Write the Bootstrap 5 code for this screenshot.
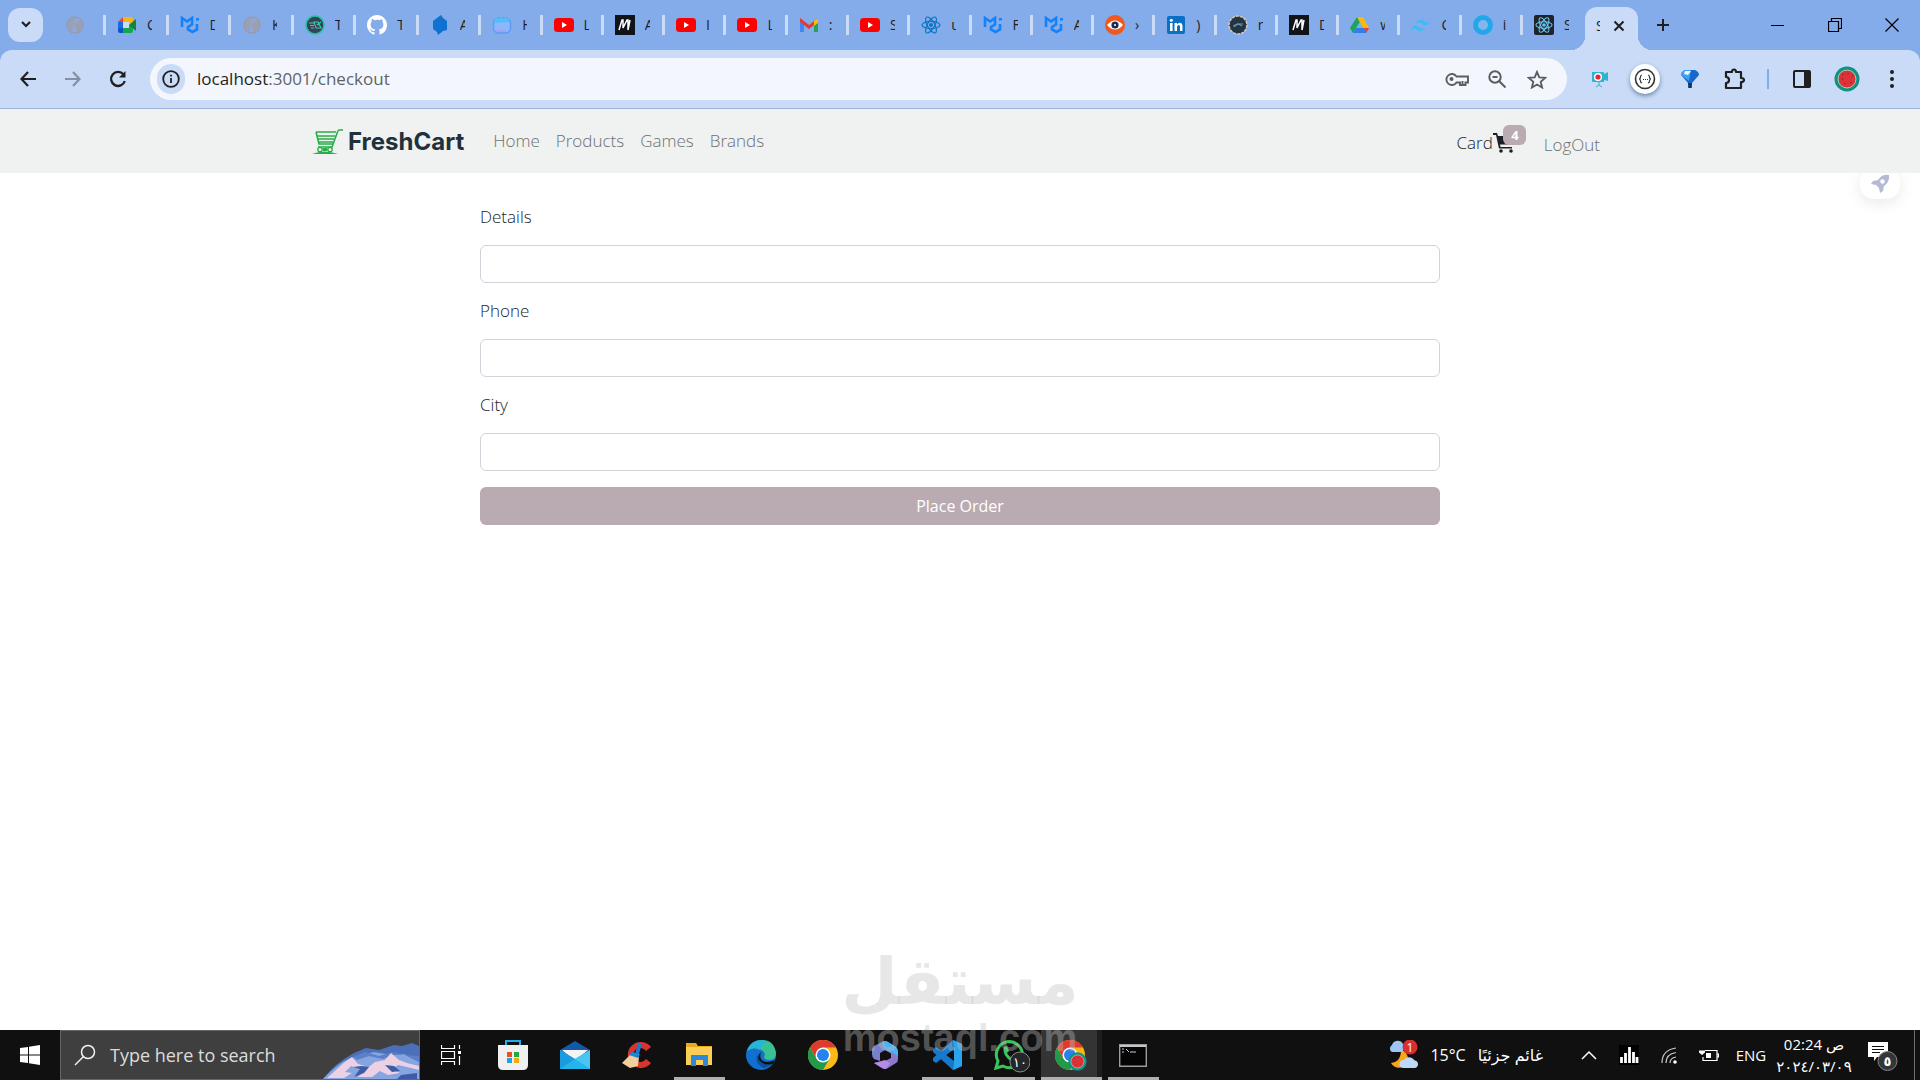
<!DOCTYPE html>
<html lang="en">
<head>
<meta charset="utf-8">
<meta name="viewport" content="width=device-width, initial-scale=1">
<title>FreshCart checkout</title>
<link rel="stylesheet" href="https://cdn.jsdelivr.net/npm/bootstrap@5.3.0/dist/css/bootstrap.min.css">
<style>
  body { font-family: "Open Sans", "Noto Sans", "DejaVu Sans", sans-serif; font-size: 17px; font-weight: 300; color: #212529; background: #fff; overflow: hidden; }
  svg { display: block; flex: none; }
  button { border: 0; background: none; padding: 0; }
  a { text-decoration: none; }

  .tabstrip { height: 50px; background: #84abea; padding-left: 8px; color: #1f1f1f; }
  .tab-search { width: 35px; height: 34px; border-radius: 12px; background: #c9dbf6; }
  .tabs-narrow { flex: 375 1 0; }
  .tabs-main { flex: 1041 1 0; }
  .tab-item { height: 20px; flex: 1 1 0; min-width: 0; border-left: 3px solid #c9dbf6; padding-left: 11px; gap: 10px; color: #1f1f1f; font-size: 14px; font-weight: 400; }
  .tab-item span { width: 5px; overflow: hidden; line-height: 20px; }
  .tab-first { flex: none; width: 60px; border-left: 0; padding-left: 22px; }
  .tab-last { flex: none; width: 65px; }
  .tab-active { position: relative; width: 53px; height: 43px; background: #c9dbf6; border-radius: 12px 12px 0 0; font-size: 14px; gap: 13px; padding: 0 0 6px 11px; }
  .tab-active span { width: 4px; overflow: hidden; font-weight: 400; }
  .tab-active::before, .tab-active::after { content: ""; position: absolute; bottom: 0; width: 14px; height: 14px; }
  .tab-active::before { left: -14px; background: radial-gradient(circle at 0 0, transparent 14px, #c9dbf6 14px); }
  .tab-active::after { right: -14px; background: radial-gradient(circle at 100% 0, transparent 14px, #c9dbf6 14px); }
  .tab-new { width: 50px; height: 50px; margin-right: 61px; }
  .win-btn { width: 57px; height: 50px; }

  .toolbar-wrap { background: #84abea; }
  .toolbar { height: 59px; padding: 0 6px 0 5px; background: #c9dbf6; border-bottom: 1px solid #9db0d8; border-radius: 12px 12px 0 0; }
  .tool-btn { width: 45px; height: 45px; }
  .omnibox { height: 42px; margin: 0 10px; border-radius: 21px; background: #f3f7fd; padding-left: 7px; padding-right: 10px; }
  .site-info { width: 28px; height: 30px; border-radius: 15px; background: #c9dbf6; }
  .omnibox-url { position: relative; height: 32px; margin-left: 12px; }
  .omnibox-url input { width: 100%; height: 32px; border: 0; background: transparent; outline: 0; color: transparent; font-size: 17px; padding: 0; }
  .omnibox-url label { position: absolute; inset: 0; pointer-events: none; font-size: 17px; line-height: 32px; color: #5f6368; font-weight: 400; }
  .omnibox-url b { font-weight: 400; color: #1f1f1f; }
  .omni-btn { width: 40px; height: 40px; }
  .tool-sep { width: 22px; }
  .tool-sep i { width: 2px; height: 20px; background: #84abea; }
  .round-ext { width: 30px; height: 30px; border-radius: 50%; background: #fff; box-shadow: 0 2px 4px #6d86ae; }

  .shopnav { height: 64px; background: #f0f2f1; padding: 0; position: relative; z-index: 2; }
  .brandmark { gap: 4px; padding-top: 2px; color: #21313c; font-family: Inter, sans-serif; font-size: 24px; font-weight: 700; line-height: 30px; margin-right: 21px; }
  .shopnav .nav-link { padding: 8px; color: #6c7073; line-height: 24px; }
  .cart-link { position: relative; padding-top: 4px; line-height: 24px; color: #212529; margin-right: 21px; }
  .cart-count { position: absolute; left: 47px; top: -2px; width: 23px; height: 20px; border-radius: 6px; background: #baabb2; color: #fff; font-size: 13px; font-weight: 700; line-height: 20px; text-align: center; }
  .launcher { position: absolute; z-index: 1; right: 20px; top: 168px; width: 40px; height: 31px; border-radius: 14px; background: #fff; box-shadow: 0 4px 16px rgba(0,0,0,.09); }

  .checkout { padding-top: 16px; }
  .checkout label { display: block; margin: 16px 0; line-height: 24px; }
  .checkout .form-control { height: 38px; border-color: #ced4da; }
  .btn-order { height: 38px; margin-top: 16px; border-radius: 6px; background: #baabb2; color: #fff; font-size: 16px; font-weight: 400; line-height: 24px; }

  .taskbar { height: 50px; background: #101010; color: #fff; font-weight: 400; position: relative; }
  .start-btn { width: 60px; height: 50px; }
  .task-search { width: 360px; height: 50px; background: #3f3f3f; border: 1px solid #666; padding-left: 13px; gap: 8px; overflow: hidden; }
  .task-search input { width: 180px; border: 0; outline: 0; background: transparent; color: #e4e4e4; font-size: 18px; padding: 0 0 0 6px; }
  .task-search input::placeholder { color: #dcdcdc; opacity: 1; }
  .task-app { width: 62px; height: 50px; position: relative; }
  .is-open::after { content: ""; position: absolute; left: 6px; right: 5px; bottom: 0; height: 3px; background: #b1adb0; }
  .is-current { background: linear-gradient(90deg, transparent 1px, #343434 1px, #343434 57px, #1d1d1f 57px); }
  .is-current::after { left: 1px; right: 0; }
  .weather { gap: 12px; font-size: 16px; margin-right: 26px; color: #fff; }
  .weather bdi, .clock { font-family: "Open Sans", "DejaVu Sans", sans-serif; }
  .tray-btn { width: 40px; height: 50px; color: #fff; }
  .lang-btn { width: 44px; height: 50px; color: #fff; font-size: 15px; }
  .clock { width: 82px; font-size: 15px; line-height: 22px; text-align: center; color: #fff; }
  .notice { width: 56px; margin-right: 3px; }
  .desk-edge { width: 6px; height: 50px; border-left: 1px solid #6d6d6d; }

  .watermark { position: absolute; left: 0; right: 0; bottom: 22px; z-index: 5; pointer-events: none; text-align: center; color: rgba(192,192,192,.39); font-weight: 700; }
  .watermark bdi { display: block; font-family: "DejaVu Sans", sans-serif; font-size: 65px; line-height: 72px; }
  .watermark span { display: block; font-family: "Liberation Sans", sans-serif; font-size: 38px; line-height: 40px; }
</style>
<script src="https://cdn.jsdelivr.net/npm/bootstrap@5.3.0/dist/js/bootstrap.bundle.min.js"></script>
</head>
<body class="d-flex flex-column min-vh-100 position-relative">

<svg width="0" height="0" class="position-absolute" aria-hidden="true">
  <symbol id="globe" viewBox="0 0 20 20"><circle cx="10" cy="10" r="8" fill="#8fa8d6" stroke="#979bad" stroke-width="1.500"/><path d="M3 8l3-4 4-1 1 2-3 1 1 3-3 2 2 2-1 3-3-3zM11 8l4-3 2 3v4l-4 5-2-1 1-3-3-2z" fill="#9c9fae"/></symbol>
  <symbol id="meet" viewBox="0 0 20 20"><path d="M1 7l5-5v5z" fill="#ea4335"/><path d="M6 2h8q2 0 2 2v4l-4 2V7H6z" fill="#fbb512"/><path d="M1 7h5v6H1z" fill="#1b6be0"/><path d="M1 13h5v5H3q-2 0-2-2z" fill="#0b55c4"/><path d="M6 13h6v-3l4 2v4q0 2-2 2H6z" fill="#18a64a"/><path d="M6 7h6v6H6z" fill="#c9dbf6"/><path d="M12 10l7-6v12z" fill="#0f8540"/></symbol>
  <symbol id="mui" viewBox="0 0 20 20"><path d="M2 12V3l5 3.500L12 3v6.500L8 12v2.500l4.500 2.500 4.500-2.500V9" fill="none" stroke="#1482fa" stroke-width="2.600"/><path d="M16 3h3v2.500h-3z" fill="#1482fa"/></symbol>
  <symbol id="tealeaf" viewBox="0 0 20 20"><circle cx="10" cy="10" r="9" fill="#3a4056" stroke="#22c5a9" stroke-width="1.600"/><path d="M4 8h5M5 10.500h4M6 13h3M9 7h4l3 6h-5zM12 10l4-3" stroke="#2cd3ae" stroke-width="1.100" fill="none"/></symbol>
  <symbol id="github" viewBox="0 0 16 16"><path fill="#fff" d="M8 0C3.580 0 0 3.580 0 8c0 3.540 2.290 6.530 5.470 7.590.4.070.55-.17.55-.38v-1.490c-2.010.37-2.530-.49-2.690-.94-.09-.23-.48-.94-.82-1.130-.28-.15-.68-.52-.01-.53.63-.01 1.080.58 1.230.82.72 1.210 1.870.87 2.330.66.07-.52.28-.87.51-1.070-1.780-.2-3.640-.89-3.640-3.950 0-.87.31-1.590.82-2.150-.08-.2-.36-1.020.08-2.120 0 0 .67-.21 2.200.82A7.600 7.600 0 0 1 8 3.870c.68 0 1.360.09 2 .27 1.530-1.040 2.200-.82 2.200-.82.44 1.100.16 1.920.08 2.120.51.56.82 1.270.82 2.150 0 3.070-1.870 3.750-3.650 3.950.29.25.54.73.54 1.480v2.200c0 .21.15.46.55.38A8 8 0 0 0 16 8c0-4.420-3.580-8-8-8z"/></symbol>
  <symbol id="bluehex" viewBox="0 0 20 20"><path d="M3 6l8-6 2 3 4 3v9l-4 1-5 4-1-3-4-3z" fill="#0d72d2"/></symbol>
  <symbol id="calendar" viewBox="0 0 20 20"><rect x="1.500" y="3" width="17" height="15" rx="5" fill="#8db6fb" stroke="#5c9bf5" stroke-width="1.400"/><path d="M2 5l3-3 2 2 2-2 2 2 2-2 2 2 2-1v4L2 8z" fill="#51bff8"/><path d="M4 16h10" stroke="#ac8cf2"/></symbol>
  <symbol id="youtube" viewBox="0 0 20 20"><rect y="3" width="20" height="14" rx="3.500" fill="#f00"/><path d="M8 7l5 3-5 3z" fill="#fff"/></symbol>
  <symbol id="mono" viewBox="0 0 20 20"><path d="M0 0h20v20H0z" fill="#101318"/><path d="M4 15L7 5h1v8l4-8h1v10M15 5l-2 10" stroke="#fff" stroke-width="1.500" fill="none"/></symbol>
  <symbol id="gmail" viewBox="0 0 20 20"><path d="M1 5v12h4V9z" fill="#4285f4"/><path d="M19 5v12h-4V9z" fill="#22a455"/><path d="M1 3l9 7 9-7v4l-9 7-9-7z" fill="#e33b2e"/><path d="M15 6l4-3v5l-4 3z" fill="#fbbc04"/></symbol>
  <symbol id="atom" viewBox="0 0 20 20"><g fill="none" stroke="currentColor" stroke-width="1.200"><ellipse cx="10" cy="10" rx="9" ry="3.600"/><ellipse cx="10" cy="10" rx="9" ry="3.600" transform="rotate(60 10 10)"/><ellipse cx="10" cy="10" rx="9" ry="3.600" transform="rotate(120 10 10)"/></g><circle cx="10" cy="10" r="2" fill="currentColor"/></symbol>
  <symbol id="eye" viewBox="0 0 20 20"><circle cx="10" cy="10" r="10" fill="#f2571d"/><path d="M2 10q8-9 16 0-8 9-16 0z" fill="#fff"/><circle cx="10" cy="10" r="3.600" fill="#1e2b50"/><circle cx="10" cy="10" r="1" fill="#fff"/></symbol>
  <symbol id="linkedin" viewBox="0 0 20 20"><rect x="1" y="1" width="18" height="18" rx="2" fill="#0a70c6"/><path d="M4 8h2.600v8H4zM8.500 8H11v1.300Q12 7.800 13.700 7.800 16.500 8 16.500 11v5H14v-4.500q0-1.500-1.300-1.500T11 11.700V16H8.500z" fill="#fff"/><circle cx="5.300" cy="5.300" r="1.500" fill="#fff"/></symbol>
  <symbol id="seal" viewBox="0 0 20 20"><circle cx="10" cy="10" r="9" fill="#203646" stroke="#d7c6ae" stroke-width="1.600" stroke-dasharray="3 1"/><path d="M5 11l4-2h6M6 12l4-3 4 2" stroke="#8f979f" fill="none"/></symbol>
  <symbol id="drive" viewBox="0 0 20 20"><path d="M7 2h6L6 13l-3 5-3-5z" fill="#1ba45a"/><path d="M7 2h6l6 11h-6z" fill="#fbb90c"/><path d="M6 13h13l-3 5H3z" fill="#2f80ed"/><path d="M14 13h5l-3 5z" fill="#e84335"/><path d="M10 7l3 6H7z" fill="#84abea"/></symbol>
  <symbol id="tailwind" viewBox="0 0 20 20"><path d="M5 9q2-5 6-4 1.500.5 3 2 2 2 5-1-2 5-6 4-1.500-.5-3-2-2-2-5 1zM0 15q2-5 6-4 1.500.5 3 2 2 2 5-1-2 5-6 4-1.500-.5-3-2-2-2-5 1z" fill="#38bdf8"/></symbol>
  <symbol id="ring" viewBox="0 0 20 20"><circle cx="10" cy="10" r="7.500" fill="#84b6ee" stroke="#22a7ea" stroke-width="5"/></symbol>
  <symbol id="chrome" viewBox="0 0 30 30"><circle cx="15" cy="15" r="15" fill="#fbb917"/><path d="M2 7.500A15 15 0 0 1 28 7.500H15L8.500 18.700z" fill="#df3a30"/><path d="M2 7.500A15 15 0 0 0 15 30l6.500-11.300H8.500z" fill="#229a48"/><circle cx="15" cy="15" r="7.500" fill="#fff"/><circle cx="15" cy="15" r="6" fill="#2583ee"/></symbol>
  <symbol id="melon" viewBox="0 0 26 26"><circle cx="13" cy="13" r="12.500" fill="#129082"/><circle cx="13" cy="13" r="9" fill="#dd3238" stroke="#9ed4b0"/><path d="M9 8v1M14 7v1M18 10h1M8 13h1M17 16v1M11 17v1" stroke="#6d1c23"/></symbol>
</svg>

<header>
  <nav class="tabstrip d-flex align-items-center" aria-label="Browser tabs">
    <button class="tab-search d-flex align-items-center justify-content-center" aria-label="Search tabs"><svg width="12" height="8" viewBox="0 0 12 8"><path d="M2 1l4 4 4-4" fill="none" stroke="#1f1f1f" stroke-width="2.200"/></svg></button>
    <a href="#" class="tab-item tab-first d-flex align-items-center" aria-label="Tab"><svg width="20" height="20"><use href="#globe"/></svg></a>
    <div class="tabs-narrow d-flex">
      <a href="#" class="tab-item d-flex align-items-center"><svg width="20" height="20"><use href="#meet"/></svg><span>C</span></a>
      <a href="#" class="tab-item d-flex align-items-center"><svg width="20" height="20"><use href="#mui"/></svg><span>D</span></a>
      <a href="#" class="tab-item d-flex align-items-center"><svg width="20" height="20"><use href="#globe"/></svg><span>K</span></a>
      <a href="#" class="tab-item d-flex align-items-center"><svg width="20" height="20"><use href="#tealeaf"/></svg><span>T</span></a>
      <a href="#" class="tab-item d-flex align-items-center"><svg width="20" height="20"><use href="#github"/></svg><span>T</span></a>
      <a href="#" class="tab-item d-flex align-items-center"><svg width="20" height="20"><use href="#bluehex"/></svg><span>A</span></a>
    </div>
    <div class="tabs-main d-flex">
      <a href="#" class="tab-item d-flex align-items-center"><svg width="20" height="20"><use href="#calendar"/></svg><span>H</span></a>
      <a href="#" class="tab-item d-flex align-items-center"><svg width="20" height="20"><use href="#youtube"/></svg><span>L</span></a>
      <a href="#" class="tab-item d-flex align-items-center"><svg width="20" height="20"><use href="#mono"/></svg><span>A</span></a>
      <a href="#" class="tab-item d-flex align-items-center"><svg width="20" height="20"><use href="#youtube"/></svg><span>I</span></a>
      <a href="#" class="tab-item d-flex align-items-center"><svg width="20" height="20"><use href="#youtube"/></svg><span>L</span></a>
      <a href="#" class="tab-item d-flex align-items-center"><svg width="20" height="20"><use href="#gmail"/></svg><span>:</span></a>
      <a href="#" class="tab-item d-flex align-items-center"><svg width="20" height="20"><use href="#youtube"/></svg><span>S</span></a>
      <a href="#" class="tab-item d-flex align-items-center"><svg width="20" height="20" color="#0b75c4"><use href="#atom"/></svg><span>u</span></a>
      <a href="#" class="tab-item d-flex align-items-center"><svg width="20" height="20"><use href="#mui"/></svg><span>F</span></a>
      <a href="#" class="tab-item d-flex align-items-center"><svg width="20" height="20"><use href="#mui"/></svg><span>A</span></a>
      <a href="#" class="tab-item d-flex align-items-center"><svg width="20" height="20"><use href="#eye"/></svg><span>›</span></a>
      <a href="#" class="tab-item d-flex align-items-center"><svg width="20" height="20"><use href="#linkedin"/></svg><span>)</span></a>
      <a href="#" class="tab-item d-flex align-items-center"><svg width="20" height="20"><use href="#seal"/></svg><span>r</span></a>
      <a href="#" class="tab-item d-flex align-items-center"><svg width="20" height="20"><use href="#mono"/></svg><span>D</span></a>
      <a href="#" class="tab-item d-flex align-items-center"><svg width="20" height="20"><use href="#drive"/></svg><span>w</span></a>
      <a href="#" class="tab-item d-flex align-items-center"><svg width="20" height="20"><use href="#tailwind"/></svg><span>C</span></a>
      <a href="#" class="tab-item d-flex align-items-center"><svg width="20" height="20"><use href="#ring"/></svg><span>i</span></a>
    </div>
    <a href="#" class="tab-item tab-last d-flex align-items-center"><svg width="20" height="20" viewBox="0 0 20 20" color="#67c5f0"><rect width="20" height="20" rx="2" fill="#202329"/><use href="#atom" x="1" y="1" width="18" height="18"/></svg><span>S</span></a>
    <div class="tab-active d-flex align-items-center align-self-end"><span>S</span><button aria-label="Close tab"><svg width="12" height="12" viewBox="0 0 12 12"><path d="M1.500 1.500l9 9m0-9l-9 9" stroke="#1f1f1f" stroke-width="2"/></svg></button></div>
    <button class="tab-new d-flex align-items-center justify-content-center" aria-label="New tab"><svg width="14" height="14" viewBox="0 0 14 14"><path d="M7 1v12M1 7h12" stroke="#1f1f1f" stroke-width="2"/></svg></button>
    <button class="win-btn d-flex align-items-center justify-content-center" aria-label="Minimize"><svg width="13" height="13"><path d="M0 6.500h13" stroke="#000"/></svg></button>
    <button class="win-btn d-flex align-items-center justify-content-center" aria-label="Restore"><svg width="14" height="14" viewBox="0 0 14 14"><path d="M.5 3.500h10v10H.5zM3.500 3V.5h10v10H11" fill="none" stroke="#000" stroke-width="1.200"/></svg></button>
    <button class="win-btn d-flex align-items-center justify-content-center" aria-label="Close window"><svg width="14" height="14" viewBox="0 0 14 14"><path d="M.5.5l13 13m0-13l-13 13" stroke="#000" stroke-width="1.200"/></svg></button>
  </nav>

  <div class="toolbar-wrap">
    <div class="toolbar d-flex align-items-center">
      <button class="tool-btn d-flex align-items-center justify-content-center" aria-label="Back"><svg width="16" height="16" viewBox="0 0 16 16"><path d="M8 1L1.500 8 8 15M1.500 8H16" fill="none" stroke="#1f1f1f" stroke-width="2.200"/></svg></button>
      <button class="tool-btn d-flex align-items-center justify-content-center" aria-label="Forward"><svg width="16" height="16" viewBox="0 0 16 16"><path d="M8 1l6.500 7L8 15M14.500 8H0" fill="none" stroke="#8590a3" stroke-width="2.200"/></svg></button>
      <button class="tool-btn d-flex align-items-center justify-content-center" aria-label="Reload"><svg width="18" height="18" viewBox="0 0 18 18"><path d="M14.500 4.500A7 7 0 1 0 15.800 11" fill="none" stroke="#1f1f1f" stroke-width="2.300"/><path d="M16.500 1v6.500H10z" fill="#1f1f1f"/></svg></button>
      <div class="omnibox flex-grow-1 d-flex align-items-center">
        <button class="site-info d-flex align-items-center justify-content-center" aria-label="Site information"><svg width="18" height="18" viewBox="0 0 18 18"><circle cx="9" cy="9" r="7.800" fill="none" stroke="#1f1f1f" stroke-width="1.800"/><path d="M9 8v5M9 4.800v1.800" stroke="#1f1f1f" stroke-width="1.800"/></svg></button>
        <div class="omnibox-url flex-grow-1"><input id="url" type="text"><label for="url"><b>localhost</b>:3001/checkout</label></div>
        <button class="omni-btn d-flex align-items-center justify-content-center" aria-label="Passwords"><svg width="24" height="14" viewBox="0 0 24 14"><path d="M11.500 4.500H23v6h-2.500V13H15v-2.500h-3.500A5.500 5.500 0 1 1 11.500 4.500zM17.500 12V9" fill="none" stroke="#5b5e63" stroke-width="1.900"/><circle cx="6.500" cy="7" r="2" fill="#5b5e63"/></svg></button>
        <button class="omni-btn d-flex align-items-center justify-content-center" aria-label="Zoom"><svg width="18" height="18" viewBox="0 0 18 18"><circle cx="7" cy="7" r="5.700" fill="none" stroke="#5b5e63" stroke-width="2"/><path d="M11 11l6.500 6.500M4.500 7h5" stroke="#5b5e63" stroke-width="2"/></svg></button>
        <button class="omni-btn d-flex align-items-center justify-content-center" aria-label="Bookmark"><svg width="20" height="19" viewBox="0 0 20 19"><path d="M10 2l2.300 5.400 5.900.5-4.500 3.900 1.400 5.700L10 14.500l-5.100 3 1.400-5.700-4.500-3.900 5.900-.5z" fill="none" stroke="#5b5e63" stroke-width="1.900"/></svg></button>
      </div>
      <button class="tool-btn d-flex align-items-center justify-content-center" aria-label="Recorder"><svg width="18" height="18" viewBox="0 0 18 18"><path d="M1 2h11q1 0 1 1v1l4-2v9l-4-1v2H2q-1 0-1-1z" fill="#2db5cf"/><circle cx="7" cy="7" r="4" fill="#fff"/><circle cx="7" cy="7" r="2.600" fill="#e22736"/><path d="M8 12v3M5 17l3-2 3 2" stroke="#2db5cf" fill="none"/></svg></button>
      <button class="tool-btn d-flex align-items-center justify-content-center" aria-label="Formatter"><span class="round-ext d-flex align-items-center justify-content-center"><svg width="22" height="22" viewBox="0 0 22 22"><circle cx="11" cy="11" r="9.500" fill="none" stroke="#303338" stroke-width="1.600"/><path d="M8 7q-1.500 0-1.500 2T5 11q1.500 0 1.500 2T8 15M14 7q1.500 0 1.500 2t1.500 2q-1.500 0-1.500 2T14 15M9 11.500h1m1 0h1m1 0h1" fill="none" stroke="#303338" stroke-width="1.200"/></svg></span></button>
      <button class="tool-btn d-flex align-items-center justify-content-center" aria-label="Balloon"><svg width="18" height="20" viewBox="0 0 18 20"><path d="M4 1h10q4 2 4 5l-7 8v5H7v-5L0 6q0-3 4-5z" fill="#1669ca"/><path d="M4 1h6L8 12 0 6q0-3 4-5z" fill="#3fa0ee"/><path d="M4 2h6L7 6 3 5z" fill="#e7f8ff"/><path d="M7 14h4l-1 5H8z" fill="#20304e"/></svg></button>
      <button class="tool-btn d-flex align-items-center justify-content-center" aria-label="Extensions"><svg width="22" height="22" viewBox="0 0 22 22"><path d="M2 4h6q0-2.500 2-2.500T12 4h5v6q3 0 3 2t-3 2v6H2v-5q3 0 3-3T2 9z" fill="none" stroke="#1f1f1f" stroke-width="2.200" stroke-linejoin="round"/></svg></button>
      <div class="tool-sep d-flex justify-content-center"><i></i></div>
      <button class="tool-btn d-flex align-items-center justify-content-center" aria-label="Side panel"><svg width="18" height="18" viewBox="0 0 18 18"><rect x="1" y="1" width="16" height="16" rx="1" fill="none" stroke="#1f1f1f" stroke-width="2"/><path d="M11 1h6v16h-6z" fill="#1f1f1f"/></svg></button>
      <button class="tool-btn d-flex align-items-center justify-content-center" aria-label="Profile"><svg width="26" height="26"><use href="#melon"/></svg></button>
      <button class="tool-btn d-flex align-items-center justify-content-center" aria-label="Menu"><svg width="4" height="18" viewBox="0 0 4 18" fill="#1f1f1f"><circle cx="2" cy="2" r="2"/><circle cx="2" cy="9" r="2"/><circle cx="2" cy="16" r="2"/></svg></button>
    </div>
  </div>
</header>

<div class="flex-grow-1 d-flex flex-column">
  <nav class="navbar navbar-expand shopnav">
    <div class="container">
      <a href="#" class="brandmark d-flex align-items-center"><svg width="32" height="26" viewBox="0 0 32 26"><path d="M31 1h-4q-1 0-1.500 2L20 18H6M4 3h20M4 3l3 12h14M5 7h18M6 10h16M6 13h15" fill="none" stroke="#29ad49" stroke-width="1.600"/><path d="M0 25q12-5 26 0z" fill="#29ad49"/><circle cx="8" cy="20.500" r="2.200" fill="#f0f2f1" stroke="#29ad49" stroke-width="1.300"/><circle cx="18" cy="20.500" r="2.200" fill="#f0f2f1" stroke="#29ad49" stroke-width="1.300"/><path d="M11 19h4v3h-4z" fill="#29ad49"/></svg>FreshCart</a>
      <ul class="navbar-nav me-auto">
        <li class="nav-item"><a class="nav-link" href="#">Home</a></li>
        <li class="nav-item"><a class="nav-link" href="#">Products</a></li>
        <li class="nav-item"><a class="nav-link" href="#">Games</a></li>
        <li class="nav-item"><a class="nav-link" href="#">Brands</a></li>
      </ul>
      <a href="#" class="cart-link d-flex align-items-center">Card<svg width="22" height="20" viewBox="0 0 22 20"><path d="M0 0h4l1 3h16l-2 8.500H7L7.500 14H19v1.600H6L3 2H0z" fill="#1c2024"/><circle cx="8" cy="18" r="1.800" fill="#1c2024"/><circle cx="18" cy="18" r="1.800" fill="#1c2024"/></svg><span class="cart-count">4</span></a>
      <ul class="navbar-nav"><li class="nav-item pt-2"><a class="nav-link" href="#">LogOut</a></li></ul>
    </div>
  </nav>
  <button class="launcher d-flex align-items-center justify-content-center" aria-label="Launch"><svg width="20" height="20" viewBox="0 0 20 20"><path d="M19 1q-7-1-11 5L3 7 1 10l5 1 3 3 1 5 3-2 1-5q6-4 5-11z" fill="#b6b9d5"/><circle cx="12.500" cy="7.500" r="2.200" fill="#fff"/></svg></button>

  <main>
    <form class="checkout w-50 mx-auto">
      <label for="details">Details</label>
      <input id="details" type="text" class="form-control">
      <label for="phone">Phone</label>
      <input id="phone" type="tel" class="form-control">
      <label for="city">City</label>
      <input id="city" type="text" class="form-control">
      <button type="button" class="btn btn-order w-100">Place Order</button>
    </form>
  </main>
</div>

<footer class="taskbar d-flex align-items-center">
  <button class="start-btn d-flex align-items-center justify-content-center" aria-label="Start"><svg width="20" height="20" viewBox="0 0 20 20"><path d="M0 3l8-1v7.500H0zM9 1.800L20 0v9.500H9zM0 10.500h8V18l-8-1zM9 10.500h11V20L9 18.200z" fill="#fff"/></svg></button>
  <div class="task-search d-flex align-items-center">
    <svg width="22" height="22" viewBox="0 0 22 22"><circle cx="14" cy="8" r="6.500" fill="none" stroke="#f2f2f2" stroke-width="1.500"/><path d="M9.500 12.500L1 21" stroke="#f2f2f2" stroke-width="1.500"/></svg>
    <input type="text" placeholder="Type here to search" aria-label="Search">
    <svg class="ms-auto align-self-end" width="96" height="36" viewBox="0 0 96 36"><path d="M0 36Q12 20 31 10l12-5 13 2 15-5 8 1 10-3 7 3v33z" fill="#4b70b8"/><path d="M0 36Q18 17 31 14l20-5 18 3 12-1 15 8v17z" fill="#84a5df"/><path d="M30 14l12-5 14 4 15-4 10 3 15 1v6l-14-7-10-1-12 5-14-3-12 4z" fill="#5b7fc9"/><path d="M14 26q7-7 15-12l6 7 7 2-8 2-6-2-6 6 7 1-8 5H4zM41 28l11-9 10-2 6-7 8 7 8 3 12 3v4l-12-3-9-2-6 4 8 4-12 2-8-4-8 6H35z" fill="#ecd0e4"/><path d="M30 24l7 2-6 8 10-4 5-6-8-1M62 22l9 1 6 5-8 1M78 32l16-2v6H74z" fill="#3f5ba5"/></svg>
  </div>
  <button class="task-app d-flex align-items-center justify-content-center" aria-label="Task view"><svg width="20" height="20" viewBox="0 0 20 20"><path d="M.5 0v3.500h13V0M.5 20v-3.500h13V20M.5 6.500h13v7H.5zM18.500 0v4M18.500 11v9" fill="none" stroke="#fff" stroke-width="1.200"/><path d="M17 6h3v3h-3z" fill="#fff"/></svg></button>
  <button class="task-app d-flex align-items-center justify-content-center" aria-label="Store"><svg width="30" height="30" viewBox="0 0 30 30"><path d="M8 6V1h14v5" fill="none" stroke="#26a9ec" stroke-width="2"/><path d="M0 5h30v20q0 5-5 5H5q-5 0-5-5z" fill="#f0f0f0"/><path d="M9 12h5v5H9z" fill="#f04d22"/><path d="M16 12h5v5h-5z" fill="#28a745"/><path d="M9 18h5v5H9z" fill="#1ba3e8"/><path d="M16 18h5v5h-5z" fill="#f2ad13"/></svg></button>
  <button class="task-app d-flex align-items-center justify-content-center" aria-label="Mail"><svg width="30" height="28" viewBox="0 0 30 28"><path d="M0 9L15 0l15 9v6H0z" fill="#1459a6"/><path d="M2 9h26L15 20z" fill="#f4f4f4"/><path d="M0 9l15 9 15-9v19H0z" fill="#25b4ec"/><path d="M0 28l15-10L0 9z" fill="#1a9be0"/><path d="M30 28L15 18 30 9z" fill="#49c5f2"/></svg></button>
  <button class="task-app d-flex align-items-center justify-content-center" aria-label="Cleaner"><svg width="30" height="28" viewBox="0 0 30 28"><path d="M29 6A13 13 0 1 0 29 22l-5-4a7 7 0 1 1 0-8z" fill="#d9332d"/><path d="M15 13l3-11" stroke="#1f78cc" stroke-width="4"/><path d="M8 14l9 2-1 9-8 2-8-5z" fill="#f0cf9d"/><path d="M7 14l3-3 8 2-2 4z" fill="#1b87d8"/></svg></button>
  <button class="task-app is-open d-flex align-items-center justify-content-center" aria-label="File Explorer"><svg width="28" height="24" viewBox="0 0 28 24"><path d="M1 0h10l2 3h14v8H1z" fill="#eda81b"/><path d="M1 4h26v18H1z" fill="#fbcf55"/><path d="M6 23V12h17v11h-5v-6h-7v6z" fill="#2d89d8"/></svg></button>
  <button class="task-app d-flex align-items-center justify-content-center" aria-label="Edge"><svg width="30" height="30" viewBox="0 0 30 30"><circle cx="15" cy="15" r="15" fill="#1170cf"/><path d="M1 11Q5 0 16 0q12 0 14 13 0 7-6 7-6 0-6-3 2-3-1-6Q9 5 1 11z" fill="#39c191"/><path d="M1 11Q5 0 16 0l6 2q-7 2-8 8-7-4-13 1z" fill="#27b5d8"/><path d="M12 14q-5 9 6 14l8-3q-10 1-14-11z" fill="#0c4fa0"/><path d="M15 12q-3 9 6 10 4 0 8-2l-2 4q-9 2-14-4-2-5 2-8z" fill="#101010"/></svg></button>
  <button class="task-app d-flex align-items-center justify-content-center" aria-label="Chrome"><svg width="30" height="30"><use href="#chrome"/></svg></button>
  <button class="task-app d-flex align-items-center justify-content-center" aria-label="Microsoft 365"><svg width="26" height="28" viewBox="0 0 26 28"><path d="M10 1q3-2 6 0l8 5q2 2 2 5v5l-8-4-5-3-5 3v8l-6-2q-2-2-2-5V9q0-2 2-4z" fill="#7882cc"/><path d="M10 1q3-2 6 0l8 5q2 2 2 5v4l-8-4-6-4z" fill="#4ab4f0"/><path d="M26 15v3q0 3-2 4l-8 5q-3 2-6 0l-8-5 11-2 6-3v-6z" fill="#8c79cf"/><path d="M2 22l11-3 5 3-4 6q-2 0-4-1z" fill="#b48be6"/></svg></button>
  <button class="task-app is-open d-flex align-items-center justify-content-center" aria-label="VS Code"><svg width="30" height="30" viewBox="0 0 30 30"><path d="M21 0l9 4v22l-9 4L1 12V9l3-2 18 14V9L4 23l-3-2v-3z" fill="#1679cb"/><path d="M21 0l9 4v22l-9 4 1-6V8z" fill="#29a3ed"/></svg></button>
  <button class="task-app is-open d-flex align-items-center justify-content-center" aria-label="WhatsApp"><svg width="42" height="36" viewBox="0 0 42 36"><path d="M8 31l2-7a13 13 0 1 1 5 5z" fill="none" stroke="#36c65a" stroke-width="3"/><path d="M16 10l3-1 2 5-2 2q2 4 6 5l2-2 4 2-1 3q-4 4-10-2-6-6-4-12z" fill="#36c65a"/><circle cx="32" cy="25" r="10" fill="#242729" stroke="#898989"/><text x="32" y="30" fill="#fff" font-family="DejaVu Sans" font-size="13" text-anchor="middle">١٠</text></svg></button>
  <button class="task-app is-open is-current d-flex align-items-center justify-content-center" aria-label="Chrome, current"><svg width="32" height="32" viewBox="0 0 32 32"><use href="#chrome" x="0" y="1" width="30" height="30"/><use href="#melon" x="13" y="13" width="19" height="19"/></svg></button>
  <button class="task-app is-open d-flex align-items-center justify-content-center" aria-label="Terminal"><svg width="28" height="23" viewBox="0 0 28 23"><path d="M.7.700h26.600v21.600H.7z" fill="#050505" stroke="#9b9ca0" stroke-width="1.400"/><path d="M1 1h26v2H1z" fill="#c4c5c9"/><path d="M3 5h2m-2 3h2m2-3l3 3m1 0h6" stroke="#ccc"/></svg></button>

  <div class="ms-auto d-flex align-items-center">
    <button class="weather d-flex align-items-center" aria-label="Weather"><svg width="30" height="30" viewBox="0 0 30 30"><path d="M13 10a9 9 0 1 1-10 13q10-1 10-13z" fill="#f8a51c"/><path d="M4 12a4 4 0 0 1 0-7 6 6 0 0 1 11-1v8z" fill="#9dc7f2"/><path d="M15 28a4 4 0 0 1 1-8 6 6 0 0 1 10 0q4 1 4 4t-3 4z" fill="#bdd9f7"/><circle cx="22" cy="7" r="7.500" fill="#d92f32"/><text x="22" y="12" fill="#fff" font-family="Open Sans" font-size="12" text-anchor="middle">1</text></svg><span>15°C</span><bdi lang="ar">غائم جزئيًا</bdi></button>
    <button class="tray-btn d-flex align-items-center justify-content-center" aria-label="Hidden icons"><svg width="16" height="10" viewBox="0 0 16 10"><path d="M1 9l7-7 7 7" fill="none" stroke="#fff" stroke-width="1.500"/></svg></button>
    <button class="tray-btn d-flex align-items-center justify-content-center" aria-label="Network meter"><svg width="20" height="20" viewBox="0 0 20 20"><path d="M0 0h20v20H0z" fill="#000"/><path d="M2.500 18v-6M6.500 18V8M10.500 18V2M14.500 18V7M18 18v-6" stroke="#fff" stroke-width="2.800"/></svg></button>
    <button class="tray-btn d-flex align-items-center justify-content-center" aria-label="Wi-Fi"><svg width="16" height="17" viewBox="0 0 16 17"><path d="M1 16Q1 3 15 1M5 16Q5 7 15 5.500M9 16q0-5 6-6" fill="none" stroke="#c8c8c8" stroke-width="1.200"/><circle cx="14" cy="15" r="1.800" fill="#fff"/></svg></button>
    <button class="tray-btn d-flex align-items-center justify-content-center" aria-label="Battery"><svg width="20" height="14" viewBox="0 0 20 14"><path d="M6 2.500h12v10H4V9M18 6h1.500v3H18" fill="none" stroke="#fff" stroke-width="1.200"/><path d="M7 5h5v5H7z" fill="#fff"/><path d="M1.500 0v2M4.500 0v2M0 2.500h6v2L3 7 0 4.500z" fill="#fff"/></svg></button>
    <button class="lang-btn">ENG</button>
    <div class="clock"><div><bdi>02:24</bdi> <bdi lang="ar">ص</bdi></div><div dir="ltr">٢٠٢٤/٠٣/٠٩</div></div>
    <button class="notice d-flex align-items-center justify-content-center" aria-label="Notifications"><svg width="30" height="32" viewBox="0 0 30 32"><path d="M0 3h20v15H9l-3 4v-4H0z" fill="#fff"/><path d="M4 7.500h12M4 10.500h12M4 13.500h8" stroke="#101010" stroke-width="1.200"/><circle cx="19.500" cy="22" r="9.500" fill="#34373a" stroke="#858585"/><text x="19.500" y="27" fill="#fff" font-family="DejaVu Sans" font-size="13" font-weight="700" text-anchor="middle">٥</text></svg></button>
    <div class="desk-edge"></div>
  </div>
</footer>

<div class="watermark"><bdi lang="ar">مستقل</bdi><span>mostaql.com</span></div>
</body>
</html>
